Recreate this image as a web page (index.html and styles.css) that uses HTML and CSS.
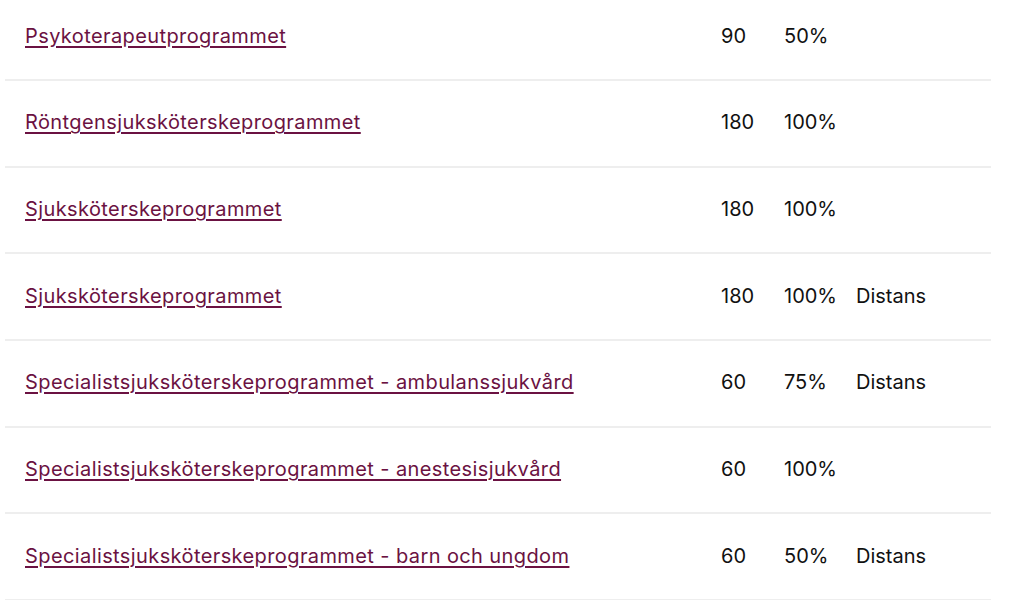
FILE: index.html
```html
<!DOCTYPE html>
<html lang="sv">
<head>
<meta charset="utf-8">
<title>Program</title>
<link rel="stylesheet" href="styles.css">
</head>
<body>
<div class="programs">
  <div class="row"><a class="name" href="#">Psykoterapeutprogrammet</a><span class="cell">90</span><span class="cell">50%</span><span class="cell"></span></div>
  <div class="row"><a class="name" href="#">Röntgensjuksköterskeprogrammet</a><span class="cell">180</span><span class="cell">100%</span><span class="cell"></span></div>
  <div class="row"><a class="name" href="#">Sjuksköterskeprogrammet</a><span class="cell">180</span><span class="cell">100%</span><span class="cell"></span></div>
  <div class="row"><a class="name" href="#">Sjuksköterskeprogrammet</a><span class="cell">180</span><span class="cell">100%</span><span class="cell">Distans</span></div>
  <div class="row"><a class="name" href="#">Specialistsjuksköterskeprogrammet - ambulanssjukvård</a><span class="cell">60</span><span class="cell">75%</span><span class="cell">Distans</span></div>
  <div class="row"><a class="name" href="#">Specialistsjuksköterskeprogrammet - anestesisjukvård</a><span class="cell">60</span><span class="cell">100%</span><span class="cell"></span></div>
  <div class="row"><a class="name" href="#">Specialistsjuksköterskeprogrammet - barn och ungdom</a><span class="cell">60</span><span class="cell">50%</span><span class="cell">Distans</span></div>
</div>
</body>
</html>
```
FILE: styles.css
```css
html, body {
  margin: 0;
  padding: 0;
  background: #ffffff;
}
body {
  font-family: Inter, "Noto Sans", sans-serif;
  font-size: 20px;
  color: #111111;
  overflow: hidden;
}
.programs {
  width: 986px;
  margin: -5.5px 0 0 5px;
}
.row {
  display: grid;
  grid-template-columns: 696px 63px 72px 155px;
  align-items: center;
  box-sizing: border-box;
  height: 86.67px;
  padding-bottom: 2px;
  border-bottom: 2px solid #eeeeee;
}
.name, .cell {
  padding-left: 20px;
  line-height: 24px;
  white-space: nowrap;
}
.name {
  color: #6b1242;
  letter-spacing: 0.4px;
  text-decoration: underline;
  text-decoration-thickness: 1.6px;
  text-underline-offset: 3px;
}
```
